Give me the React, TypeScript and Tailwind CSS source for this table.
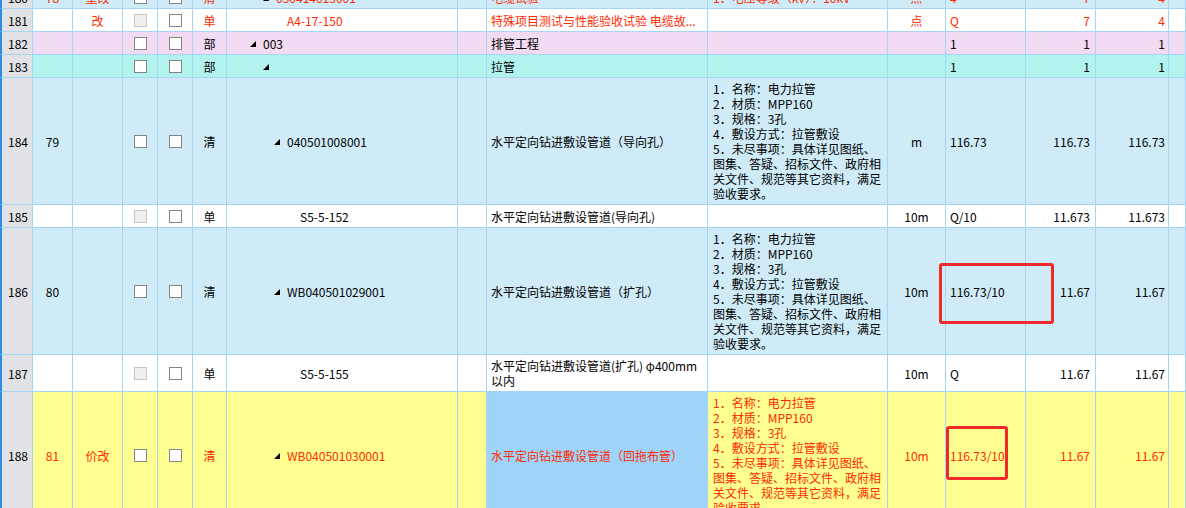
import React from 'react';

interface RowData {
  no: string;
  seq?: string;
  mark?: string;
  cbDisabled?: boolean;
  kind: string;
  code?: string;
  tri?: boolean;
  codePad: string;
  name?: React.ReactNode;
  nameBg?: string;
  desc?: string[];
  unit?: string;
  expr?: string;
  q1?: string;
  q2?: string;
  bg: string;
  red?: boolean;
  tall?: boolean;
}

const DESC = [
  '1．名称：电力拉管',
  '2．材质：MPP160',
  '3．规格：3孔',
  '4．敷设方式：拉管敷设',
  '5．未尽事项：具体详见图纸、',
  '图集、答疑、招标文件、政府相',
  '关文件、规范等其它资料，满足',
  '验收要求。',
];

const rows: RowData[] = [
  { no: '180', seq: '78', mark: '重改', kind: '清', code: '030414015001', tri: true, codePad: 'pl-[36px]', name: '电缆试验', desc: ['1．电压等级（kV）：10kV'], unit: '点', expr: '4', q1: '7', q2: '4', bg: 'bg-[#ceebf7]', red: true },
  { no: '181', mark: '改', cbDisabled: true, kind: '单', code: 'A4-17-150', codePad: 'pl-[60px]', name: '特殊项目测试与性能验收试验 电缆故...', unit: '点', expr: 'Q', q1: '7', q2: '4', bg: 'bg-white', red: true },
  { no: '182', kind: '部', code: '003', tri: true, codePad: 'pl-[23px]', name: '排管工程', expr: '1', q1: '1', q2: '1', bg: 'bg-[#f1daf2]' },
  { no: '183', kind: '部', code: '', tri: true, codePad: 'pl-[36px]', name: '拉管', expr: '1', q1: '1', q2: '1', bg: 'bg-[#b3f3ee]' },
  { no: '184', seq: '79', kind: '清', code: '040501008001', tri: true, codePad: 'pl-[47px]', name: '水平定向钻进敷设管道（导向孔）', desc: DESC, unit: 'm', expr: '116.73', q1: '116.73', q2: '116.73', bg: 'bg-[#ceebf7]', tall: true },
  { no: '185', cbDisabled: true, kind: '单', code: 'S5-5-152', codePad: 'pl-[73px]', name: '水平定向钻进敷设管道(导向孔)', unit: '10m', expr: 'Q/10', q1: '11.673', q2: '11.673', bg: 'bg-white' },
  { no: '186', seq: '80', kind: '清', code: 'WB040501029001', tri: true, codePad: 'pl-[47px]', name: '水平定向钻进敷设管道（扩孔）', desc: DESC, unit: '10m', expr: '116.73/10', q1: '11.67', q2: '11.67', bg: 'bg-[#ceebf7]', tall: true },
  {
    no: '187', cbDisabled: true, kind: '单', code: 'S5-5-155', codePad: 'pl-[73px]',
    name: (<><div>水平定向钻进敷设管道(扩孔) φ400mm</div><div>以内</div></>),
    unit: '10m', expr: 'Q', q1: '11.67', q2: '11.67', bg: 'bg-white', tall: true,
  },
  { no: '188', seq: '81', mark: '价改', kind: '清', code: 'WB040501030001', tri: true, codePad: 'pl-[47px]', name: '水平定向钻进敷设管道（回拖布管）', nameBg: 'bg-[#9fd4fa]', desc: DESC, unit: '10m', expr: '116.73/10', q1: '11.67', q2: '11.67', bg: 'bg-[#ffff91]', red: true, tall: true },
];

const Cell: React.FC<{ className?: string; children?: React.ReactNode }> = ({ className = '', children }) => (
  <div className={`flex items-center border-r border-b border-[#a8d5f5] min-w-0 ${className}`}>{children}</div>
);

const Checkbox: React.FC<{ disabled?: boolean }> = ({ disabled }) => (
  <span
    className={`block w-[13px] h-[13px] border ${disabled ? 'bg-[#efefef] border-[#c6c6c6]' : 'bg-white border-[#858585]'}`}
  />
);

// small "expanded" tree marker
const Tri = () => (
  <svg width="6" height="6" viewBox="0 0 6 6" className="mt-[2px] shrink-0">
    <polygon points="6,0 6,6 0,6" fill="#000" />
  </svg>
);

const Row: React.FC<{ r: RowData }> = ({ r }) => {
  const tc = r.red ? 'text-[#ff2a00]' : 'text-black';
  return (
    <div
      className={`grid grid-cols-[33px_40px_50px_35px_35px_34px_231px_29px_221px_180px_58px_80px_70px_73px_1fr] ${r.tall ? '' : 'h-[23px]'} ${r.bg}`}
    >
      {/* row header */}
      <Cell className="justify-center bg-[#e0e2e6] border-l-2 border-l-[#2b8be6] pl-[2px] text-black">{r.no}</Cell>
      <Cell className={`justify-center ${tc}`}>{r.seq}</Cell>
      <Cell className={`justify-center ${tc}`}>{r.mark}</Cell>
      <Cell className="justify-center">
        <Checkbox disabled={r.cbDisabled} />
      </Cell>
      <Cell className="justify-center">
        <Checkbox />
      </Cell>
      <Cell className={`justify-center ${tc}`}>{r.kind}</Cell>
      <Cell className={`${r.codePad} ${tc} whitespace-nowrap`}>
        {r.tri && <Tri />}
        {r.code && <span className={r.tri ? 'ml-[7px]' : ''}>{r.code}</span>}
      </Cell>
      <Cell />
      <Cell className={`pl-[4px] py-[3px] whitespace-nowrap overflow-hidden ${tc} ${r.nameBg ?? ''}`}>
        <div>{r.name}</div>
      </Cell>
      <Cell className={`pl-[5px] py-[3px] whitespace-nowrap overflow-hidden ${tc}`}>
        {r.desc && (
          <div>
            {r.desc.map((l, i) => (
              <div key={i}>{l}</div>
            ))}
          </div>
        )}
      </Cell>
      <Cell className={`justify-center ${tc}`}>{r.unit}</Cell>
      <Cell className={`pl-[4px] ${tc}`}>{r.expr}</Cell>
      <Cell className={`justify-end pr-[5px] ${tc}`}>{r.q1}</Cell>
      <Cell className={`justify-end pr-[3px] ${tc}`}>{r.q2}</Cell>
      <Cell />
    </div>
  );
};

export default function App() {
  return (
    <div className="relative w-[1186px] h-[508px] overflow-hidden bg-white font-['Noto_Sans_CJK_SC','Noto_Sans',sans-serif] text-[12px] leading-[15px]">
      <div className="-mt-[14px]">
        {rows.map(r => (
          <Row key={r.no} r={r} />
        ))}
      </div>

      {/* annotation boxes */}
      <div className="absolute left-[939px] top-[263px] w-[115px] h-[61px] border-[3px] border-[#f02a2a] rounded-[3px]" />
      <div className="absolute left-[946px] top-[426px] w-[62px] h-[54px] border-[3px] border-[#f02a2a] rounded-[3px]" />
    </div>
  );
}
